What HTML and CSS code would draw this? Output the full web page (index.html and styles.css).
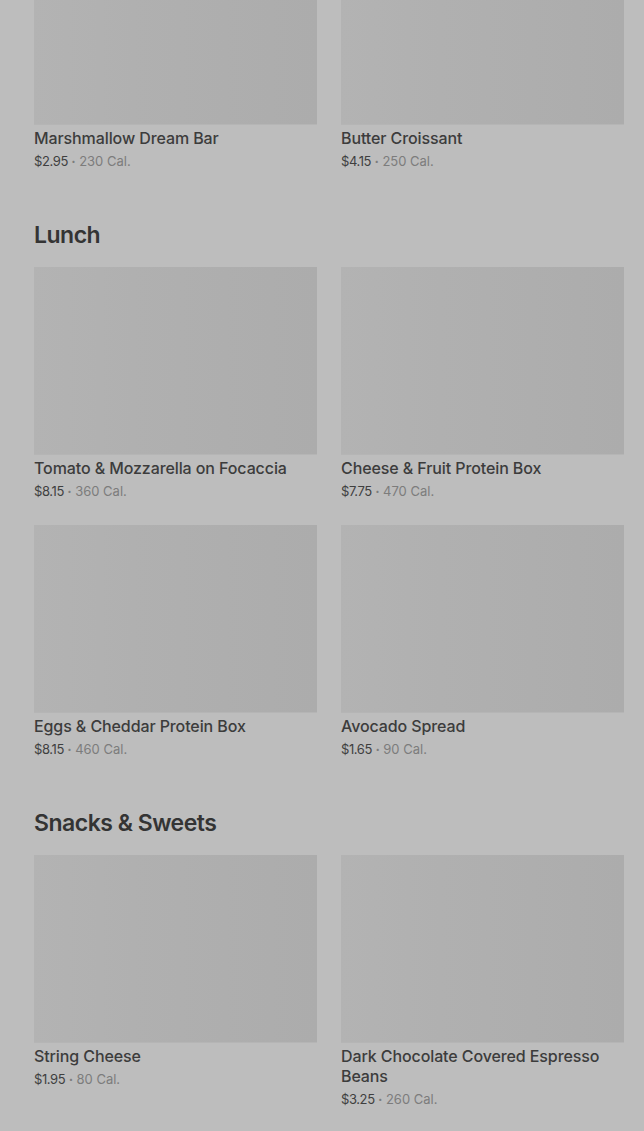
FILE: index.html
```html
<!DOCTYPE html>
<html lang="en">
<head>
    <meta charset="UTF-8">
    <meta name="viewport" content="width=device-width, initial-scale=1.0">
    <title>Menu</title>
    <link rel="stylesheet" href="styles.css">
</head>
<body>
    <div class="menu">

        <!-- breakfast, scrolled partly out of view -->
        <section class="menu-section first">
            <div class="item-grid">
                <div class="item">
                    <div class="item-image"></div>
                    <div class="item-name">Marshmallow Dream Bar</div>
                    <div class="item-meta"><span class="price">$2.95</span> <span class="dot">&bull;</span> 230 Cal.</div>
                </div>
                <div class="item">
                    <div class="item-image"></div>
                    <div class="item-name">Butter Croissant</div>
                    <div class="item-meta"><span class="price">$4.15</span> <span class="dot">&bull;</span> 250 Cal.</div>
                </div>
            </div>
        </section>

        <section class="menu-section">
            <h2>Lunch</h2>
            <div class="item-grid">
                <div class="item">
                    <div class="item-image"></div>
                    <div class="item-name">Tomato &amp; Mozzarella on Focaccia</div>
                    <div class="item-meta"><span class="price">$8.15</span> <span class="dot">&bull;</span> 360 Cal.</div>
                </div>
                <div class="item">
                    <div class="item-image"></div>
                    <div class="item-name">Cheese &amp; Fruit Protein Box</div>
                    <div class="item-meta"><span class="price">$7.75</span> <span class="dot">&bull;</span> 470 Cal.</div>
                </div>
                <div class="item">
                    <div class="item-image"></div>
                    <div class="item-name">Eggs &amp; Cheddar Protein Box</div>
                    <div class="item-meta"><span class="price">$8.15</span> <span class="dot">&bull;</span> 460 Cal.</div>
                </div>
                <div class="item">
                    <div class="item-image"></div>
                    <div class="item-name">Avocado Spread</div>
                    <div class="item-meta"><span class="price">$1.65</span> <span class="dot">&bull;</span> 90 Cal.</div>
                </div>
            </div>
        </section>

        <section class="menu-section">
            <h2>Snacks &amp; Sweets</h2>
            <div class="item-grid">
                <div class="item">
                    <div class="item-image"></div>
                    <div class="item-name">String Cheese</div>
                    <div class="item-meta"><span class="price">$1.95</span> <span class="dot">&bull;</span> 80 Cal.</div>
                </div>
                <div class="item">
                    <div class="item-image"></div>
                    <div class="item-name">Dark Chocolate Covered Espresso Beans</div>
                    <div class="item-meta"><span class="price">$3.25</span> <span class="dot">&bull;</span> 260 Cal.</div>
                </div>
            </div>
        </section>

    </div>
</body>
</html>
```

FILE: styles.css
```css
* {
    margin: 0;
    padding: 0;
    box-sizing: border-box;
}

html, body {
    height: 100%;
    overflow: hidden;
}

body {
    font-family: Inter, "Liberation Sans", sans-serif;
    background-color: #bdbdbd;
    color: #3b3b3b;
}

.menu {
    padding: 0 20px 0 34px;
    margin-top: -63px;
}

.menu-section {
    margin-top: 48px;
}

.menu-section.first {
    margin-top: 0;
}

h2 {
    font-size: 23px;
    line-height: 32px;
    font-weight: 600;
    letter-spacing: -0.5px;
    color: #343434;
    margin-bottom: 16px;
}

.item-grid {
    display: grid;
    grid-template-columns: 283px 283px;
    column-gap: 24px;
    row-gap: 24px;
}

.item-image {
    height: 188px;
    background: linear-gradient(90deg, #b3b3b3 0%, #b0b0b0 35%, #acacac 100%);
    border-bottom: 1px solid #b5b5b5;
    margin-bottom: 3px;
}

.item-name {
    font-size: 16px;
    line-height: 20px;
    font-weight: 500;
    letter-spacing: -0.1px;
    color: #3c3c3c;
}

.item-meta {
    margin-top: 4px;
    font-size: 13px;
    line-height: 18px;
    color: #7c7c7c;
}

.price {
    color: #3f3f3f;
    letter-spacing: -0.4px;
}

.dot {
    font-size: 7px;
    vertical-align: 2px;
}
```
